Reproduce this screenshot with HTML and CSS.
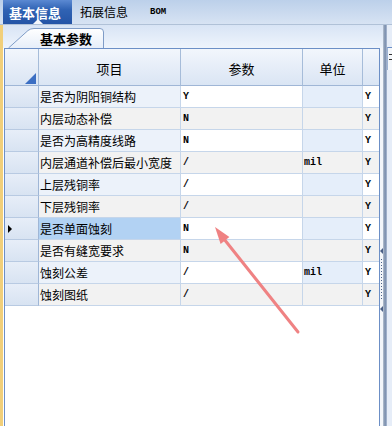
FILE: index.html
```html
<!DOCTYPE html>
<html>
<head>
<meta charset="utf-8">
<link rel="stylesheet" href="styles.css">
</head>
<body>
<div class="app">
  <div class="topbar">
    <div class="tab active">基本信息<span class="caret"></span></div>
    <div class="tab plain">拓展信息</div>
    <div class="tab bom">BOM</div>
  </div>
  <div class="main">
    <div class="leftstrip"></div>
    <div class="content">
      <div class="subtabs">
        <div class="subtab">
          <svg class="subtab-shape" width="97" height="21" viewBox="0 0 97 21">
            <defs>
              <linearGradient id="tg" x1="0" y1="0" x2="0" y2="1">
                <stop offset="0" stop-color="#ffffff"/>
                <stop offset="1" stop-color="#e6eef9"/>
              </linearGradient>
            </defs>
            <path d="M0.5,21 L20,3.5 Q22.5,1.5 26,1.5 L92,1.5 Q95.5,1.5 95.5,5 L95.5,21" fill="url(#tg)" stroke="#7f9cc7" stroke-width="1"/>
          </svg>
          <span class="subtab-label">基本参数</span>
        </div>
      </div>
      <div class="gridarea">
        <div class="grid">
          <div class="row head">
            <div class="c rh corner"><span class="corner-tri"></span></div>
            <div class="c">项目</div>
            <div class="c">参数</div>
            <div class="c">单位</div>
            <div class="c"></div>
          </div>
          <div class="row odd"><div class="c rh"></div><div class="c item">是否为阴阳铜结构</div><div class="c val">Y</div><div class="c unit"></div><div class="c ex">Y</div></div>
          <div class="row even"><div class="c rh"></div><div class="c item">内层动态补偿</div><div class="c val">N</div><div class="c unit"></div><div class="c ex">Y</div></div>
          <div class="row odd"><div class="c rh"></div><div class="c item">是否为高精度线路</div><div class="c val">N</div><div class="c unit"></div><div class="c ex">Y</div></div>
          <div class="row even"><div class="c rh"></div><div class="c item">内层通道补偿后最小宽度</div><div class="c val">/</div><div class="c unit">mil</div><div class="c ex">Y</div></div>
          <div class="row odd"><div class="c rh"></div><div class="c item">上层残铜率</div><div class="c val">/</div><div class="c unit"></div><div class="c ex">Y</div></div>
          <div class="row even"><div class="c rh"></div><div class="c item">下层残铜率</div><div class="c val">/</div><div class="c unit"></div><div class="c ex">Y</div></div>
          <div class="row odd sel"><div class="c rh"><span class="pointer"></span></div><div class="c item">是否单面蚀刻</div><div class="c val">N</div><div class="c unit"></div><div class="c ex">Y</div></div>
          <div class="row even"><div class="c rh"></div><div class="c item">是否有缝宽要求</div><div class="c val">N</div><div class="c unit"></div><div class="c ex">Y</div></div>
          <div class="row odd"><div class="c rh"></div><div class="c item">蚀刻公差</div><div class="c val">/</div><div class="c unit">mil</div><div class="c ex">Y</div></div>
          <div class="row even"><div class="c rh"></div><div class="c item">蚀刻图纸</div><div class="c val">/</div><div class="c unit"></div><div class="c ex">Y</div></div>
        </div>
        <div class="side">
          <span class="side-tri"></span>
          <span class="side-dots"></span>
          <span class="side-tri"></span>
        </div>
      </div>
    </div>
    <div class="splitter"></div>
    <div class="rightpanel"><div class="minibox"><span></span><span></span></div></div>
  </div>
  <svg class="arrow" width="392" height="426" viewBox="0 0 392 426">
    <line x1="298" y1="332" x2="224" y2="239" stroke="#ef8283" stroke-width="3" stroke-linecap="round"/>
    <polygon points="215,227 220.6,244 229.4,237" fill="#ef8283"/>
  </svg>
</div>
</body>
</html>
```
FILE: styles.css
```css
* { box-sizing: border-box; margin: 0; padding: 0; }
html, body { width: 392px; height: 426px; overflow: hidden; }
body {
  font-family: "Noto Sans CJK SC", "Noto Sans", sans-serif;
  font-size: 12px;
  color: #000;
  background: #fff;
}
.app { position: relative; width: 392px; height: 426px; display: flex; flex-direction: column; }

/* top tabs */
.topbar {
  height: 25px;
  flex: none;
  display: flex;
  align-items: stretch;
  padding-left: 3px;
  background: linear-gradient(#bcd0ea, #d7e3f3);
  border-bottom: 1px solid #b0c1d7;
}
.tab { position: relative; display: flex; align-items: center; line-height: 1; }
.tab.active {
  width: 69px;
  padding-left: 6px;
  font-size: 13px;
  font-weight: bold;
  color: #fff;
  background: linear-gradient(#5b89d2, #3063b4 40%, #2454a6);
}
.caret {
  position: absolute;
  left: 30px;
  bottom: 0;
  width: 0; height: 0;
  border-left: 5px solid transparent;
  border-right: 5px solid transparent;
  border-bottom: 5px solid #f4f7fc;
}
.tab.plain { margin-left: 8px; font-size: 12px; }
.tab.bom {
  margin-left: 22px;
  font-family: "Liberation Mono", monospace;
  font-size: 9px;
  font-weight: bold;
}

/* body */
.main { flex: 1; display: flex; min-height: 0; }
.leftstrip { width: 3px; flex: none; background: #f1cf7a; }
.content { width: 380px; flex: none; display: flex; flex-direction: column; }
.subtabs {
  height: 23px;
  flex: none;
  display: flex;
  align-items: flex-end;
  padding-left: 5px;
  background: linear-gradient(#d8e4f5, #eef4fc);
}
.subtab { position: relative; width: 97px; height: 21px; display: flex; align-items: center; }
.subtab-shape { position: absolute; left: 0; top: 0; }
.subtab-label { position: relative; margin-left: 32px; font-size: 13px; font-weight: bold; line-height: 1; padding-top: 1px; }

.gridarea { flex: 1; display: flex; min-height: 0; }
.grid {
  margin-left: 1px;
  width: 376px;
  flex: none;
  border: 1px solid #6c8fc6;
  border-bottom: none;
  background: #fff;
}
.row {
  display: grid;
  grid-template-columns: 34px 142px 122px 60px 16px;
  height: 22px;
}
.c {
  border-right: 1px solid #c6d6ea;
  border-bottom: 1px solid #c6d6ea;
  display: flex;
  align-items: center;
  white-space: nowrap;
  overflow: hidden;
}
.c:last-child { border-right: none; }

.row.head { height: 37px; }
.head .c {
  justify-content: center;
  padding-top: 3px;
  font-size: 13px;
  background: linear-gradient(#f2f6fc, #dae5f4);
  border-right-color: #a6bcd9;
  border-bottom-color: #9fb6d6;
}
.head .corner { justify-content: flex-end; align-items: flex-end; padding: 0 2px 1px 0; }
.corner-tri {
  width: 0; height: 0;
  border-left: 11px solid transparent;
  border-bottom: 11px solid #3c6fc3;
}

.rh {
  background: linear-gradient(#e7eef8, #d8e3f2);
  border-right-color: #9fb6d6;
  border-bottom-color: #b8cae2;
  padding-left: 3px;
}
.pointer {
  width: 0; height: 0;
  border-top: 4px solid transparent;
  border-bottom: 4px solid transparent;
  border-left: 4px solid #000;
}
.item { padding-left: 1px; font-size: 12px; }
.val, .unit, .ex {
  font-family: "Liberation Mono", monospace;
  font-size: 10px;
  font-weight: bold;
}
.val { padding-left: 2px; }
.unit { padding-left: 1px; }
.ex { padding-left: 2px; }

.odd .item { background: #ecf2fa; }
.odd .val { background: #fff; }
.odd .unit { background: #e5eefa; }
.odd .ex { background: #fff; }
.even .item, .even .val, .even .unit, .even .ex { background: #f2f2f2; }
.sel .item { background: #b2d2f3; }

.side {
  width: 3px;
  flex: none;
  display: flex;
  flex-direction: column;
  align-items: flex-end;
  padding-top: 200px;
  background: #f3f6fa;
}
.side-tri {
  width: 0; height: 0;
  border-top: 3px solid transparent;
  border-bottom: 3px solid transparent;
  border-right: 3px solid #4a5f86;
}
.side-dots {
  width: 1px;
  height: 40px;
  margin: 5px 1px 7px 0;
  background: repeating-linear-gradient(#4a5f86 0 1px, transparent 1px 3px);
}
.splitter {
  width: 4px;
  flex: none;
  background: linear-gradient(90deg, #b9c4d3, #8c9db6, #7f93b3, #b3c1d6);
}
.rightpanel { width: 5px; flex: none; background: #e6edf8; padding-top: 22px; }
.minibox {
  height: 23px;
  border-top: 1px solid #6c8fc6;
  border-left: 1px solid #9db3d4;
  background: #f4f7fb;
  display: flex;
  flex-direction: column;
  gap: 4px;
  padding: 6px 0 0 1px;
}
.minibox span { display: block; height: 1px; width: 3px; background: #333; }

.arrow { position: absolute; left: 0; top: 0; pointer-events: none; }
```
